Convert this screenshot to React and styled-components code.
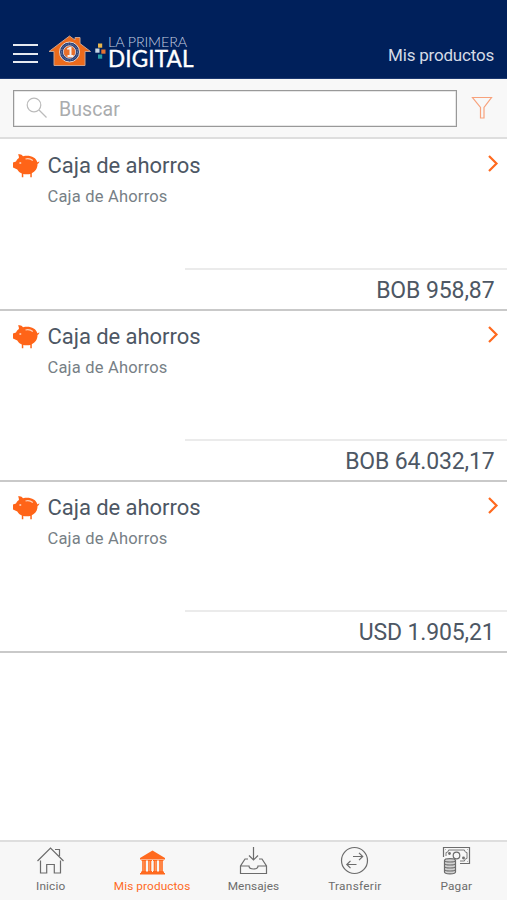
import React from "react";
import styled, { createGlobalStyle } from "styled-components";

const GlobalStyle = createGlobalStyle`
  * {
    box-sizing: border-box;
  }
  body {
    margin: 0;
    background: #fff;
    font-family: Roboto, "Liberation Sans", sans-serif;
  }
`;

const Screen = styled.div`
  display: flex;
  flex-direction: column;
  height: 900px;
  overflow: hidden;
`;

const Header = styled.header`
  display: flex;
  align-items: flex-end;
  height: 79px;
  padding: 0 13px 10px 13px;
  background: #00205b;
  border-bottom: 1px solid #1c3870;
`;

const MenuButton = styled.div`
  display: flex;
  flex-direction: column;
  justify-content: space-between;
  width: 25px;
  height: 19px;
  margin-bottom: 5px;
  span {
    height: 2px;
    background: #e6eaf1;
  }
`;

const LogoMark = styled.svg`
  flex: none;
  margin-left: 10px;
`;

const Wordmark = styled.div`
  display: flex;
  flex-direction: column;
  margin-left: 0;
  margin-bottom: -1px;
  font-family: Lato, sans-serif;
  color: #fff;
  white-space: nowrap;
`;

const WordmarkTop = styled.span`
  font-size: 14.3px;
  font-weight: 300;
  line-height: 14px;
  letter-spacing: -0.1px;
  color: #c5cfe0;
`;

const WordmarkBottom = styled.span`
  font-size: 22.5px;
  font-weight: 400;
  line-height: 20px;
  letter-spacing: 0.15px;
  -webkit-text-stroke: 0.4px #fff;
`;

const HeaderTitle = styled.div`
  margin-left: auto;
  margin-bottom: 3px;
  font-size: 17px;
  line-height: 20px;
  letter-spacing: -0.2px;
  color: #d5dbe6;
`;

const SearchBar = styled.div`
  display: flex;
  align-items: center;
  height: 60px;
  padding: 0 14px 0 13px;
  background: #f8f8f8;
  border-bottom: 2px solid #dedede;
`;

const SearchField = styled.div`
  display: flex;
  align-items: center;
  width: 444px;
  height: 37px;
  padding-left: 12px;
  background: #fff;
  border: 1px solid #999;
  box-shadow: inset 0 0 0 0.5px #d0d0d0;
  margin-top: 1px;
  svg {
    margin-top: -2px;
  }
`;

const Placeholder = styled.span`
  margin-left: 11px;
  padding-top: 1px;
  font-size: 19.5px;
  letter-spacing: 0.1px;
  color: #aaacae;
`;

const FilterIcon = styled.svg`
  margin-left: auto;
`;

const List = styled.main`
  flex: 1;
  padding-top: 1px;
`;

const Product = styled.section`
  display: flex;
  flex-direction: column;
  height: 171px;
  border-bottom: 2px solid #c9c9c9;
`;

const ProductTop = styled.div`
  display: flex;
  flex: 1;
  padding: 12px 7px 0 12px;
`;

const ProductNames = styled.div`
  flex: 1;
  margin-left: 6.5px;
`;

const ProductName = styled.div`
  font-size: 22px;
  line-height: 28px;
  letter-spacing: -0.05px;
  color: #4d5764;
`;

const ProductType = styled.div`
  margin-top: 5px;
  font-size: 16.5px;
  line-height: 24px;
  letter-spacing: 0.2px;
  color: #777f86;
`;

const Balance = styled.div`
  height: 41px;
  margin-left: 185px;
  padding-right: 12.5px;
  border-top: 2px solid #ebebeb;
  font-size: 23px;
  line-height: 41px;
  letter-spacing: ${({ $spacing }) => $spacing};
  text-align: right;
  color: #4d5764;
`;

const TabBar = styled.nav`
  display: grid;
  grid-template-columns: repeat(5, 1fr);
  height: 60px;
  background: #f7f7f7;
  border-top: 2px solid #dedede;
`;

const Tab = styled.div`
  display: flex;
  flex-direction: column;
  align-items: center;
  padding-top: 4px;
  color: ${({ $active }) => ($active ? "#ff6a1f" : "#6c6c6c")};
`;

const TabLabel = styled.span`
  margin-top: 3px;
  font-size: 11.8px;
  line-height: 16px;
  letter-spacing: ${({ $spacing = "0.1px" }) => $spacing};
  white-space: nowrap;
`;

const Logo = () => (
  <LogoMark width="60" height="34" viewBox="0 0 60 34">
    <path
      d="M1 17.500 21.500 2l5.500 4V3.500h5V9.500l10.500 8h-5.500V31.500H6V17.500z"
      fill="#ed6b1c"
      stroke="#c9a18e"
      strokeWidth="1"
    />
    <circle cx="21.500" cy="18" r="10" fill="#263d76" stroke="#dfd4d3" />
    <circle
      cx="21.500"
      cy="18"
      r="8"
      fill="none"
      stroke="#8794b1"
      strokeDasharray="1 0.8"
    />
    <circle cx="21.500" cy="18" r="6.200" fill="#e86f2b" stroke="#d3c7cd" />
    <path d="M19 14.500l2.500-1.500h2v8h2v2h-6v-2h2v-5.500H19z" fill="#f3efef" />
    <rect x="50" y="9.500" width="4.200" height="4.200" fill="#e8b54a" />
    <rect x="47.300" y="14.500" width="4.200" height="4.200" fill="#c6d6e5" />
    <rect x="53.300" y="15.500" width="4.200" height="4.200" fill="#e57333" />
    <rect x="50" y="20.500" width="4.200" height="4.200" fill="#249da5" />
  </LogoMark>
);

const Piggy = () => (
  <svg width="29" height="27" viewBox="0 0 29 27">
    <path
      d="M6 2.500c2-.7 4 0 5 1.700C17.500 2.700 24 4.800 25.300 10.300c.9.100 1.300-.6 2-1 0 1.400-.7 2.300-1.800 2.800C25.700 16.500 23 19.800 19.800 21.200V25.300h-1.500V21.900c-2 .5-5 .5-7 .1V25.300H9.800V21.500C7.800 20.700 6.300 19.500 5.300 17.500L1 15.500v-5l3-1c.6-1.500 1.500-2.700 2.900-3.600C7 4.500 6.700 3.500 6 2.500z"
      fill="#ff6418"
    />
    <path
      d="M13.500 7c2.800-.7 5.300-.1 7.300 1.500"
      fill="none"
      stroke="#ffd3bb"
      strokeWidth="1.200"
    />
    <circle cx="8.300" cy="11" r="1.100" fill="#ffc7a8" />
  </svg>
);

const Chevron = () => (
  <svg width="14" height="22" viewBox="0 0 14 22">
    <path
      d="M3 4 10.500 11.500 3 19"
      fill="none"
      stroke="#ff6a1f"
      strokeWidth="2.200"
    />
  </svg>
);

const icons = {
  home: (
    <>
      <path d="M1.500 15 14.500 2 27.500 15M19 3.500h4.500V10" />
      <path d="M4.500 14.500V27h6.200V18.500h7.600V27h6.200V14.500" />
    </>
  ),
  bank: (
    <g fill="currentColor" stroke="none">
      <path d="M2 13.500V12L14.500 4.500 27 12v1.500zM3 26h23v1H3zM2 27h25v1.500H2z" />
      <path d="M3.500 14h5v1h-.7v10h.7v1h-5v-1h.7V15h-.7zM9.500 14h4.500v1h-.7v10h.7v1H9.500v-1h.7V15h-.7zM15 14h4.500v1h-.7v10h.7v1H15v-1h.7V15H15zM20.500 14h5v1h-.7v10h.7v1h-5v-1h.7V15h-.7z" />
      <path
        d="M5.900 15v10M11.700 15v10M17.300 15v10M23 15v10"
        stroke="#ffb891"
        strokeWidth=".7"
      />
    </g>
  ),
  inbox: (
    <>
      <path d="M14.500 1v13M10 9.500l4.500 4.500 4.500-4.500" />
      <path d="M9 13H6L1.500 20v7.500h26V20L23 13h-3M1.500 20H10c0 4 9 4 9 0h8.500" />
    </>
  ),
  transfer: (
    <>
      <circle cx="14.500" cy="14.500" r="13" />
      <path d="M13 10.500h9.500M19 6.800l3.700 3.700-3.700 3.700M16.500 18.500H7M10.500 14.800 6.800 18.500l3.700 3.700" />
    </>
  ),
  pay: (
    <>
      <path d="M1.500 11V1.500h26V17.500H18" />
      <path
        d="M4 10V6.500c1.500 0 2.500-1 2.500-2.500h16c0 1.500 1 2.500 2.500 2.500v6c-1.500 0-2.500 1-2.500 2.500H18M3.500 3.500h.5M25 3.500h.5M25 15.500h.5"
        strokeWidth=".9"
      />
      <circle cx="14.500" cy="9.500" r="3.300" />
      <circle cx="7.500" cy="7.500" r=".8" fill="currentColor" />
      <circle cx="21.500" cy="12" r=".8" fill="currentColor" />
      <path
        d="M2.500 14.500c0-2.500 11-2.500 11 0V26c0 2.500-11 2.500-11 0z"
        fill="#d2d2d2"
      />
      <path d="M2.500 14.500c0 2 11 2 11 0M2.500 17.500c0 2 11 2 11 0M2.500 20.500c0 2 11 2 11 0M2.500 23.500c0 2 11 2 11 0" />
    </>
  ),
};

const TabIcon = ({ name }) => (
  <svg
    width="29"
    height="29"
    viewBox="0 0 29 29"
    fill="none"
    stroke="currentColor"
    strokeWidth="1.200"
  >
    {icons[name]}
  </svg>
);

const products = [
  { id: 1, balance: "BOB 958,87", spacing: "-0.1px" },
  { id: 2, balance: "BOB 64.032,17", spacing: "-0.15px" },
  { id: 3, balance: "USD 1.905,21", spacing: "-0.15px" },
];

const tabs = [
  { icon: "home", label: "Inicio", spacing: "0.15px" },
  { icon: "bank", label: "Mis productos", active: true, spacing: "0.1px" },
  { icon: "inbox", label: "Mensajes", spacing: "0.1px" },
  { icon: "transfer", label: "Transferir", spacing: "0.3px" },
  { icon: "pay", label: "Pagar", spacing: "0.2px" },
];

function App() {
  return (
    <Screen>
      <GlobalStyle />
      <Header>
        <MenuButton>
          <span />
          <span />
          <span />
        </MenuButton>
        <Logo />
        <Wordmark>
          <WordmarkTop>LA PRIMERA</WordmarkTop>
          <WordmarkBottom>DIGITAL</WordmarkBottom>
        </Wordmark>
        <HeaderTitle>Mis productos</HeaderTitle>
      </Header>
      <SearchBar>
        <SearchField>
          <svg width="22" height="22" viewBox="0 0 22 22" fill="none">
            <g stroke="#bbb" strokeWidth="1.200">
              <circle cx="8" cy="8" r="6.800" />
              <path d="M13 13 20.500 20.500" />
            </g>
          </svg>
          <Placeholder>Buscar</Placeholder>
        </SearchField>
        <FilterIcon width="22" height="24" viewBox="0 0 22 24">
          <path
            d="M1.500 1.500h19L13 11.500V22H9.500V11.500z"
            fill="none"
            stroke="#f8a27c"
            strokeWidth="1.200"
          />
        </FilterIcon>
      </SearchBar>
      <List>
        {products.map(({ id, balance, spacing }) => (
          <Product key={`product-${id}`}>
            <ProductTop>
              <Piggy />
              <ProductNames>
                <ProductName>Caja de ahorros</ProductName>
                <ProductType>Caja de Ahorros</ProductType>
              </ProductNames>
              <Chevron />
            </ProductTop>
            <Balance $spacing={spacing}>{balance}</Balance>
          </Product>
        ))}
      </List>
      <TabBar>
        {tabs.map(({ icon, label, active, spacing }) => (
          <Tab key={icon} $active={active}>
            <TabIcon name={icon} />
            <TabLabel $spacing={spacing}>{label}</TabLabel>
          </Tab>
        ))}
      </TabBar>
    </Screen>
  );
}

export default App;
